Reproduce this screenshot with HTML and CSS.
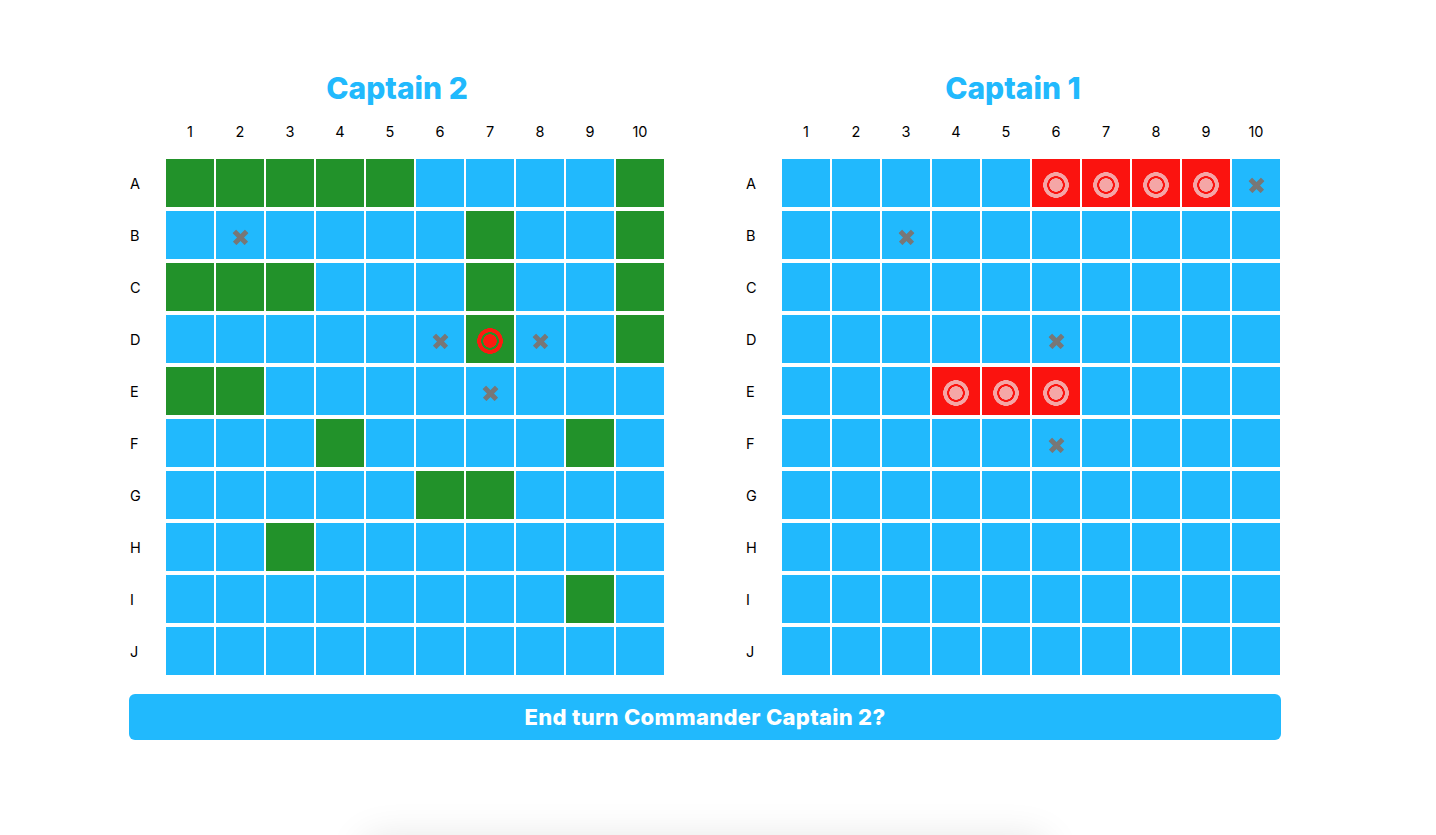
FILE: index.html
```html
<!DOCTYPE html>
<html lang="en">
<head>
<meta charset="utf-8">
<title>Battleship</title>
<link rel="stylesheet" href="styles.css">
</head>
<body>
<main class="game">
  <div class="boards">
    <section class="board">
      <h2 class="board-title">Captain 2</h2>
      <div class="grid">
        <div class="corner"></div>
        <div class="col">1</div><div class="col">2</div><div class="col">3</div><div class="col">4</div><div class="col">5</div><div class="col">6</div><div class="col">7</div><div class="col">8</div><div class="col">9</div><div class="col">10</div>

        <div class="row">A</div>
        <div class="cell ship"></div><div class="cell ship"></div><div class="cell ship"></div><div class="cell ship"></div><div class="cell ship"></div><div class="cell"></div><div class="cell"></div><div class="cell"></div><div class="cell"></div><div class="cell ship"></div>

        <div class="row">B</div>
        <div class="cell"></div><div class="cell miss"></div><div class="cell"></div><div class="cell"></div><div class="cell"></div><div class="cell"></div><div class="cell ship"></div><div class="cell"></div><div class="cell"></div><div class="cell ship"></div>

        <div class="row">C</div>
        <div class="cell ship"></div><div class="cell ship"></div><div class="cell ship"></div><div class="cell"></div><div class="cell"></div><div class="cell"></div><div class="cell ship"></div><div class="cell"></div><div class="cell"></div><div class="cell ship"></div>

        <div class="row">D</div>
        <div class="cell"></div><div class="cell"></div><div class="cell"></div><div class="cell"></div><div class="cell"></div><div class="cell miss"></div><div class="cell ship-hit"></div><div class="cell miss"></div><div class="cell"></div><div class="cell ship"></div>

        <div class="row">E</div>
        <div class="cell ship"></div><div class="cell ship"></div><div class="cell"></div><div class="cell"></div><div class="cell"></div><div class="cell"></div><div class="cell miss"></div><div class="cell"></div><div class="cell"></div><div class="cell"></div>

        <div class="row">F</div>
        <div class="cell"></div><div class="cell"></div><div class="cell"></div><div class="cell ship"></div><div class="cell"></div><div class="cell"></div><div class="cell"></div><div class="cell"></div><div class="cell ship"></div><div class="cell"></div>

        <div class="row">G</div>
        <div class="cell"></div><div class="cell"></div><div class="cell"></div><div class="cell"></div><div class="cell"></div><div class="cell ship"></div><div class="cell ship"></div><div class="cell"></div><div class="cell"></div><div class="cell"></div>

        <div class="row">H</div>
        <div class="cell"></div><div class="cell"></div><div class="cell ship"></div><div class="cell"></div><div class="cell"></div><div class="cell"></div><div class="cell"></div><div class="cell"></div><div class="cell"></div><div class="cell"></div>

        <div class="row">I</div>
        <div class="cell"></div><div class="cell"></div><div class="cell"></div><div class="cell"></div><div class="cell"></div><div class="cell"></div><div class="cell"></div><div class="cell"></div><div class="cell ship"></div><div class="cell"></div>

        <div class="row">J</div>
        <div class="cell"></div><div class="cell"></div><div class="cell"></div><div class="cell"></div><div class="cell"></div><div class="cell"></div><div class="cell"></div><div class="cell"></div><div class="cell"></div><div class="cell"></div>
      </div>
    </section>

    <section class="board">
      <h2 class="board-title">Captain 1</h2>
      <div class="grid">
        <div class="corner"></div>
        <div class="col">1</div><div class="col">2</div><div class="col">3</div><div class="col">4</div><div class="col">5</div><div class="col">6</div><div class="col">7</div><div class="col">8</div><div class="col">9</div><div class="col">10</div>

        <div class="row">A</div>
        <div class="cell"></div><div class="cell"></div><div class="cell"></div><div class="cell"></div><div class="cell"></div><div class="cell hit"></div><div class="cell hit"></div><div class="cell hit"></div><div class="cell hit"></div><div class="cell miss"></div>

        <div class="row">B</div>
        <div class="cell"></div><div class="cell"></div><div class="cell miss"></div><div class="cell"></div><div class="cell"></div><div class="cell"></div><div class="cell"></div><div class="cell"></div><div class="cell"></div><div class="cell"></div>

        <div class="row">C</div>
        <div class="cell"></div><div class="cell"></div><div class="cell"></div><div class="cell"></div><div class="cell"></div><div class="cell"></div><div class="cell"></div><div class="cell"></div><div class="cell"></div><div class="cell"></div>

        <div class="row">D</div>
        <div class="cell"></div><div class="cell"></div><div class="cell"></div><div class="cell"></div><div class="cell"></div><div class="cell miss"></div><div class="cell"></div><div class="cell"></div><div class="cell"></div><div class="cell"></div>

        <div class="row">E</div>
        <div class="cell"></div><div class="cell"></div><div class="cell"></div><div class="cell hit"></div><div class="cell hit"></div><div class="cell hit"></div><div class="cell"></div><div class="cell"></div><div class="cell"></div><div class="cell"></div>

        <div class="row">F</div>
        <div class="cell"></div><div class="cell"></div><div class="cell"></div><div class="cell"></div><div class="cell"></div><div class="cell miss"></div><div class="cell"></div><div class="cell"></div><div class="cell"></div><div class="cell"></div>

        <div class="row">G</div>
        <div class="cell"></div><div class="cell"></div><div class="cell"></div><div class="cell"></div><div class="cell"></div><div class="cell"></div><div class="cell"></div><div class="cell"></div><div class="cell"></div><div class="cell"></div>

        <div class="row">H</div>
        <div class="cell"></div><div class="cell"></div><div class="cell"></div><div class="cell"></div><div class="cell"></div><div class="cell"></div><div class="cell"></div><div class="cell"></div><div class="cell"></div><div class="cell"></div>

        <div class="row">I</div>
        <div class="cell"></div><div class="cell"></div><div class="cell"></div><div class="cell"></div><div class="cell"></div><div class="cell"></div><div class="cell"></div><div class="cell"></div><div class="cell"></div><div class="cell"></div>

        <div class="row">J</div>
        <div class="cell"></div><div class="cell"></div><div class="cell"></div><div class="cell"></div><div class="cell"></div><div class="cell"></div><div class="cell"></div><div class="cell"></div><div class="cell"></div><div class="cell"></div>
      </div>
    </section>
  </div>

  <button class="end-turn" type="button">End turn Commander Captain 2?</button>

  <div class="footer-card"></div>
</main>
</body>
</html>
```

FILE: styles.css
```css
html, body {
  margin: 0;
  padding: 0;
  background: #ffffff;
}

body {
  font-family: Inter, "Noto Sans", "Liberation Sans", sans-serif;
  color: #000;
  overflow: hidden;
}

.game {
  width: 1152px;
  margin-left: 129px;
  padding-top: 70px;
}

.boards {
  display: flex;
  justify-content: space-between;
}

.board {
  width: 536px;
}

.board-title {
  margin: 0 0 1px;
  height: 36px;
  line-height: 36px;
  text-align: center;
  font-size: 30px;
  font-weight: 800;
  color: #21b9fd;
  letter-spacing: 0;
}

.grid {
  display: grid;
  grid-template-columns: 35px repeat(10, 48px);
  grid-auto-rows: 48px;
  column-gap: 2px;
  row-gap: 4px;
}

.col {
  display: flex;
  align-items: center;
  justify-content: center;
  font-size: 14.5px;
}

.row {
  display: flex;
  align-items: center;
  padding-left: 1px;
  font-size: 14.5px;
}

.cell {
  position: relative;
  background: #21b9fd;
}

.cell.ship {
  background: #22922a;
}

.cell.ship-hit {
  background:
    radial-gradient(circle at 50% calc(50% + 2px),
      #fb1a10 0 6.5px, transparent 7px 8.6px,
      #fb1a10 9px 12.6px, transparent 13px),
    #22922a;
}

.cell.hit {
  background:
    radial-gradient(circle at 50% calc(50% + 2px),
      #f5a6a6 0 6.5px, transparent 7px 8.6px,
      #f5a6a6 9px 12.6px, transparent 13px),
    #fb130f;
}

.cell.miss::before,
.cell.miss::after {
  content: "";
  position: absolute;
  left: 50%;
  top: calc(50% + 2px);
  width: 17px;
  height: 4.5px;
  margin: -2.25px 0 0 -8.5px;
  background: #777777;
  border-radius: 0.5px;
}

.cell.miss::before {
  transform: rotate(45deg);
}

.cell.miss::after {
  transform: rotate(-45deg);
}

.end-turn {
  display: block;
  width: 100%;
  height: 46px;
  margin-top: 19px;
  border: none;
  border-radius: 6px;
  background: #21b9fd;
  color: #ffffff;
  font-family: Inter, "Noto Sans", "Liberation Sans", sans-serif;
  font-size: 22px;
  font-weight: 800;
  letter-spacing: 0.3px;
  cursor: pointer;
}

.footer-card {
  width: 680px;
  height: 200px;
  margin: 100px auto 0;
  background: #ffffff;
  box-shadow: 0 0 40px rgba(0, 0, 0, 0.12);
  border-radius: 8px;
}
```
